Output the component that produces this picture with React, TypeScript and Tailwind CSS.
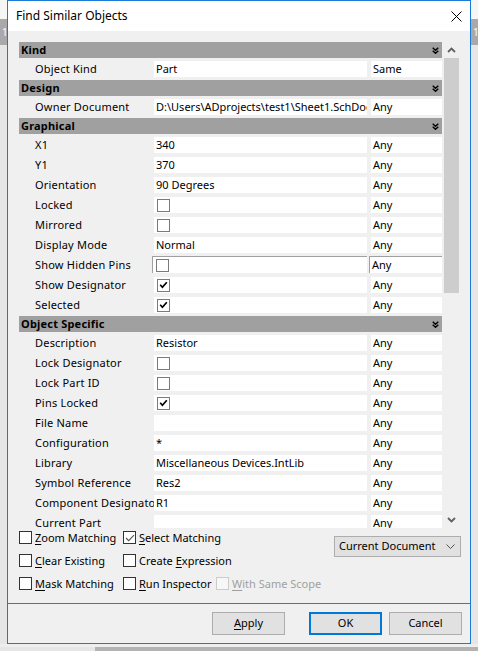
import React from 'react'

type Row =
  | { t: 'h'; label: string }
  | { t: 'r'; label: string; value?: string; check?: boolean; any: string; focus?: boolean }

const ROWS: Row[] = [
  { t: 'h', label: 'Kind' },
  { t: 'r', label: 'Object Kind', value: 'Part', any: 'Same' },
  { t: 'h', label: 'Design' },
  { t: 'r', label: 'Owner Document', value: 'D:\\Users\\ADprojects\\test1\\Sheet1.SchDoc', any: 'Any' },
  { t: 'h', label: 'Graphical' },
  { t: 'r', label: 'X1', value: '340', any: 'Any' },
  { t: 'r', label: 'Y1', value: '370', any: 'Any' },
  { t: 'r', label: 'Orientation', value: '90 Degrees', any: 'Any' },
  { t: 'r', label: 'Locked', check: false, any: 'Any' },
  { t: 'r', label: 'Mirrored', check: false, any: 'Any' },
  { t: 'r', label: 'Display Mode', value: 'Normal', any: 'Any' },
  { t: 'r', label: 'Show Hidden Pins', check: false, any: 'Any', focus: true },
  { t: 'r', label: 'Show Designator', check: true, any: 'Any' },
  { t: 'r', label: 'Selected', check: true, any: 'Any' },
  { t: 'h', label: 'Object Specific' },
  { t: 'r', label: 'Description', value: 'Resistor', any: 'Any' },
  { t: 'r', label: 'Lock Designator', check: false, any: 'Any' },
  { t: 'r', label: 'Lock Part ID', check: false, any: 'Any' },
  { t: 'r', label: 'Pins Locked', check: true, any: 'Any' },
  { t: 'r', label: 'File Name', value: '', any: 'Any' },
  { t: 'r', label: 'Configuration', value: '*', any: 'Any' },
  { t: 'r', label: 'Library', value: 'Miscellaneous Devices.IntLib', any: 'Any' },
  { t: 'r', label: 'Symbol Reference', value: 'Res2', any: 'Any' },
  { t: 'r', label: 'Component Designator', value: 'R1', any: 'Any' },
  { t: 'r', label: 'Current Part', value: '', any: 'Any' },
  { t: 'r', label: 'Part Comment', value: 'Res2', any: 'Any' },
]

function Chevrons() {
  return (
    <svg width="7" height="7" viewBox="0 0 7 7" className="shrink-0">
      <path d="M0.7 0.7 L3.5 3.2 L6.3 0.7 M0.7 3.8 L3.5 6.3 L6.3 3.8" fill="none" stroke="#000" strokeWidth="1.4" />
    </svg>
  )
}

function GridCheck({ on }: { on: boolean }) {
  return (
    <span className="ml-[1px] flex h-[13px] w-[13px] shrink-0 items-center justify-center border border-[#7a7a7a] bg-white">
      {on && (
        <svg width="9" height="8" viewBox="0 0 9 8">
          <path d="M1.2 3.8 L3.4 6.2 L7.8 1.2" fill="none" stroke="#000" strokeWidth="1.7" />
        </svg>
      )}
    </span>
  )
}

function GridRow({ row }: { row: Row }) {
  if (row.t === 'h') {
    return (
      <div className="flex h-[18px] items-center py-[1px]">
        <div className="flex h-[16px] w-full items-center bg-[#a0a0a0] pl-[2px] pr-[3px]">
          <span className="font-bold tracking-[0.2px]">{row.label}</span>
          <span className="ml-auto">
            <Chevrons />
          </span>
        </div>
      </div>
    )
  }
  const cell = row.focus
    ? 'mt-[1px] h-[17px] -ml-[2px] w-[215px] border-t border-l border-[#a0a0a0]'
    : 'mt-[2px] h-[16px] w-[213px]'
  return (
    <div className="flex h-[20px] items-start">
      <div className="w-[135px] shrink-0 overflow-hidden whitespace-nowrap pl-[16px] leading-[20px] tracking-[0.2px]">
        {row.label}
      </div>
      <div className={`${cell} flex shrink-0 items-center overflow-hidden whitespace-nowrap bg-white pl-[2px]`}>
        {row.check !== undefined ? <GridCheck on={row.check} /> : row.value}
      </div>
      <div
        className={`${
          row.focus ? 'mt-[1px] ml-[2px] h-[17px] w-[73px] border-t border-l border-[#a0a0a0]' : 'mt-[2px] ml-[4px] h-[16px] w-[71px]'
        } flex shrink-0 items-center bg-white pl-[2px]`}
      >
        {row.any}
      </div>
    </div>
  )
}

function ScrollArrow({ up }: { up: boolean }) {
  return (
    <div className="flex h-[17px] items-center justify-center">
      <svg width="9" height="6" viewBox="0 0 9 6">
        <path d={up ? 'M1 5 L4.5 1.5 L8 5' : 'M1 1 L4.5 4.5 L8 1'} fill="none" stroke="#606060" strokeWidth="1.8" />
      </svg>
    </div>
  )
}

function Box({ on, disabled }: { on?: boolean; disabled?: boolean }) {
  return (
    <span
      className={`flex h-[13px] w-[13px] shrink-0 items-center justify-center border ${
        disabled ? 'border-[#cccccc] bg-[#f7f7f7]' : 'border-[#333333] bg-white'
      }`}
    >
      {on && (
        <svg width="10" height="8" viewBox="0 0 10 8">
          <path d="M1 4 L3.7 6.7 L9 1.2" fill="none" stroke="#555" strokeWidth="1.1" />
        </svg>
      )}
    </span>
  )
}

function Option({ pre, key1, rest, on, disabled }: { pre?: string; key1: string; rest: string; on?: boolean; disabled?: boolean }) {
  return (
    <div className={`flex h-[13px] items-center gap-[3px] whitespace-nowrap ${disabled ? 'text-[#a0a0a0]' : ''}`}>
      <Box on={on} disabled={disabled} />
      <span className="leading-[13px]">
        {pre}
        <span className="underline underline-offset-[2px]">{key1}</span>
        {rest}
      </span>
    </div>
  )
}

function Button({ children, primary }: { children: React.ReactNode; primary?: boolean }) {
  return (
    <div
      className={`flex h-[23px] w-[73px] items-center justify-center bg-[#e1e1e1] ${
        primary ? 'border-2 border-[#0078d7]' : 'border border-[#adadad]'
      }`}
    >
      {children}
    </div>
  )
}

function Strip() {
  return (
    <div className="flex flex-1 flex-col">
      <div className="h-[19px] bg-[#f6f6f6]" />
      <div className="h-[26px] bg-[#a9a9a9] pl-[2px] pt-[7px] text-[10px] leading-[12px] text-white">1</div>
      <div className="flex-1 bg-[#e6e6e6]" />
    </div>
  )
}

export default function App() {
  return (
    <div className="flex h-[651px] w-[478px] flex-col overflow-hidden bg-[#e8e8e8] font-['Noto_Sans',sans-serif] text-[11px] text-black">
      <div className="flex h-[644px]">
        <div className="flex w-[7px]">
          <Strip />
        </div>
        <div className="flex w-[464px] shrink-0 flex-col border border-[#1a7bd6]">
          <div className="flex h-[30px] shrink-0 items-center bg-white pl-[8px]">
            <span className="text-[12px]">Find Similar Objects</span>
            <svg width="11" height="11" viewBox="0 0 11 11" className="ml-auto mr-[8px]">
              <path d="M0.5 0.5 L10.5 10.5 M10.5 0.5 L0.5 10.5" stroke="#000" strokeWidth="1" />
            </svg>
          </div>

          <div className="flex h-[572px] shrink-0 flex-col bg-[#f0f0f0] pl-[11px] pr-[9px] pt-[10px]">
            <div className="flex">
              <div className="h-[487px] w-[423px] overflow-hidden">
                {ROWS.map((r) => (
                  <GridRow key={r.label} row={r} />
                ))}
              </div>
              <div className="ml-[1px] flex h-[487px] w-[17px] flex-col">
                <ScrollArrow up />
                <div className="mx-[1px] h-[235px] bg-[#cdcdcd]" />
                <div className="flex-1" />
                <ScrollArrow up={false} />
              </div>
            </div>

            <div className="flex pt-[3px]">
              <div className="grid grid-cols-[104px_93px_auto] gap-y-[10px]">
                <Option key1="Z" rest="oom Matching" />
                <Option key1="S" rest="elect Matching" on />
                <div />
                <Option key1="C" rest="lear Existing" />
                <Option pre="Create " key1="E" rest="xpression" />
                <div />
                <Option key1="M" rest="ask Matching" />
                <Option key1="R" rest="un Inspector" />
                <Option key1="W" rest="ith Same Scope" disabled />
              </div>
              <div className="ml-auto mt-[5px] flex h-[21px] w-[127px] items-center border border-[#adadad] bg-[#e1e1e1] pl-[4px] pr-[5px]">
                <span>Current Document</span>
                <svg width="9" height="5" viewBox="0 0 9 5" className="ml-auto">
                  <path d="M0.5 0.5 L4.5 4.5 L8.5 0.5" fill="none" stroke="#555" strokeWidth="1" />
                </svg>
              </div>
            </div>
          </div>

          <div className="h-[1px] shrink-0 bg-[#6d6d6d]" />

          <div className="flex flex-1 items-start justify-end bg-[#f0f0f0] pr-[8px] pt-[8px]">
            <Button>
              <span>
                <span className="underline underline-offset-[2px]">A</span>pply
              </span>
            </Button>
            <div className="w-[24px]" />
            <Button primary>OK</Button>
            <div className="w-[7px]" />
            <Button>Cancel</Button>
          </div>
        </div>
        <div className="flex flex-1">
          <Strip />
        </div>
      </div>
      <div className="flex h-[7px] flex-col">
        <div className="h-[3px] bg-[#eeeeee]" />
        <div className="flex h-[4px]">
          <div className="w-[95px] bg-[#e6e6e6]" />
          <div className="flex-1 bg-[#b3b3b3]" />
        </div>
      </div>
    </div>
  )
}
